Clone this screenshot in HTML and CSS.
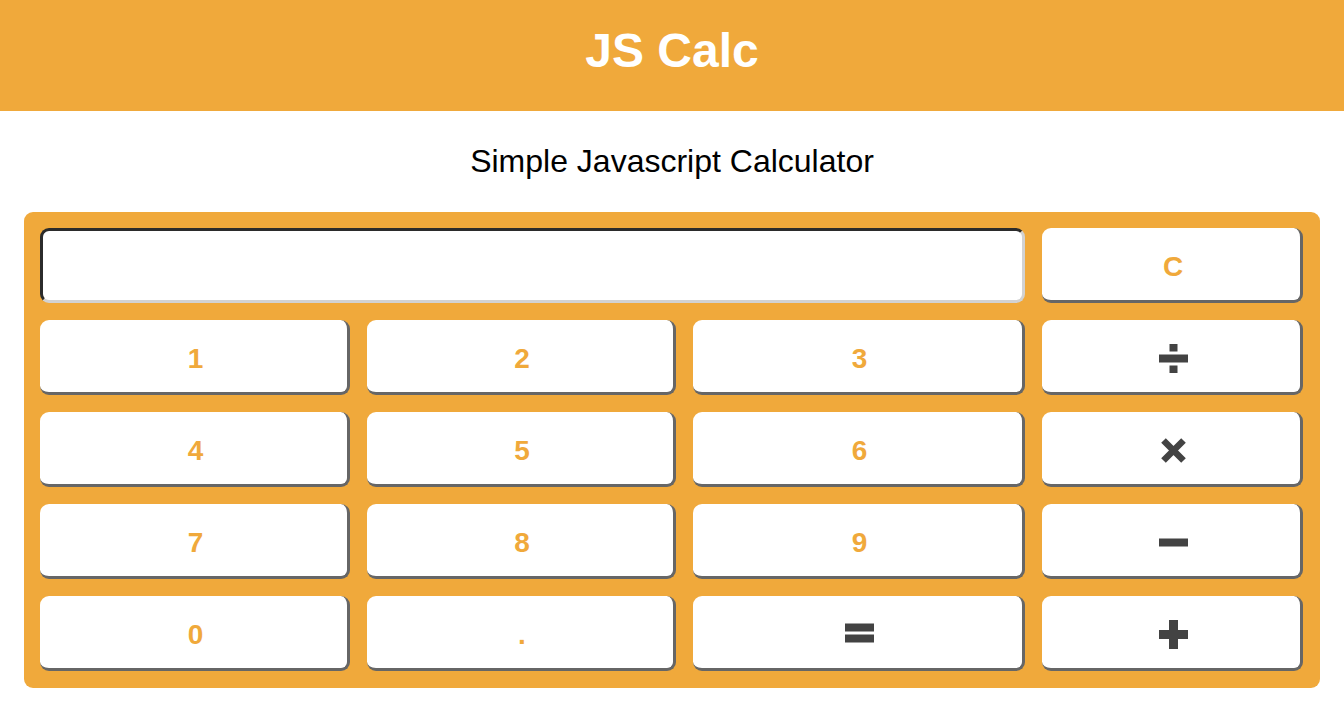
FILE: index.html
```html
<!DOCTYPE html>
<html lang="en">
<head>
<meta charset="utf-8">
<title>JS Calc</title>
<link rel="stylesheet" href="styles.css">
</head>
<body>
<header class="topbar"><h1 class="title">JS Calc</h1></header>
<p class="subtitle">Simple Javascript Calculator</p>
<main class="calc">
  <input class="display" type="text" readonly value="">
  <button class="key">C</button>
  <button class="key">1</button>
  <button class="key">2</button>
  <button class="key">3</button>
  <button class="key op" aria-label="divide"><svg viewBox="0 0 29 29" width="29" height="29"><rect x="11" y="0" width="7" height="7"/><rect x="0" y="11" width="29" height="7"/><rect x="11" y="22" width="7" height="7"/></svg></button>
  <button class="key">4</button>
  <button class="key">5</button>
  <button class="key">6</button>
  <button class="key op" aria-label="multiply"><svg viewBox="0 0 29 29" width="29" height="29"><path d="M4.5 4.5 L24.5 24.5 M24.5 4.5 L4.5 24.5" stroke-width="6.5" stroke-linecap="butt" fill="none"/></svg></button>
  <button class="key">7</button>
  <button class="key">8</button>
  <button class="key">9</button>
  <button class="key op" aria-label="minus"><svg viewBox="0 0 29 29" width="29" height="29"><rect x="0" y="11" width="29" height="7"/></svg></button>
  <button class="key">0</button>
  <button class="key">.</button>
  <button class="key op" aria-label="equals"><svg viewBox="0 0 29 29" width="29" height="29"><rect x="0" y="4" width="29" height="7"/><rect x="0" y="15" width="29" height="7"/></svg></button>
  <button class="key op" aria-label="plus"><svg viewBox="0 0 29 29" width="29" height="29"><rect x="0" y="10.5" width="29" height="8"/><rect x="10.5" y="0" width="8" height="29"/></svg></button>
</main>
</body>
</html>
```
FILE: styles.css
```css
html, body {
  margin: 0;
  padding: 0;
  background: #ffffff;
  font-family: "Liberation Sans", Arial, Helvetica, sans-serif;
}

.topbar {
  box-sizing: border-box;
  height: 111px;
  padding-bottom: 10px;
  background: #f0a93b;
  display: flex;
  align-items: center;
  justify-content: center;
}

.title {
  margin: 0;
  color: #ffffff;
  font-size: 48px;
  font-weight: bold;
  line-height: 1;
}

.subtitle {
  margin: 0;
  height: 101px;
  display: flex;
  align-items: center;
  justify-content: center;
  font-size: 32px;
  color: #000000;
}

.calc {
  margin: 0 24px;
  padding: 16px 17px 17px 16px;
  background: #f0a93b;
  border-radius: 9px;
  display: grid;
  grid-template-columns: 310px 309px 332px 261px;
  grid-auto-rows: 75px;
  gap: 17px;
}

.display {
  grid-column: 1 / span 3;
  box-sizing: border-box;
  width: 100%;
  height: 75px;
  margin: 0;
  padding: 0 12px;
  background: #ffffff;
  border-style: solid;
  border-width: 3px;
  border-color: #2b2b2b #d2d2d2 #d2d2d2 #2b2b2b;
  border-radius: 9px;
  font-family: "Liberation Sans", Arial, sans-serif;
  font-size: 28px;
  outline: none;
}

.key {
  box-sizing: border-box;
  margin: 0;
  padding: 5px 0 0 4px;
  background: #ffffff;
  border: none;
  border-right: 3px solid #666666;
  border-bottom: 3px solid #666666;
  border-radius: 9px;
  color: #f0a93b;
  font-family: "Liberation Sans", Arial, sans-serif;
  font-size: 28px;
  font-weight: bold;
  display: flex;
  align-items: center;
  justify-content: center;
  cursor: pointer;
}

.key.op svg {
  display: block;
  fill: #434343;
  stroke: #434343;
}
```
